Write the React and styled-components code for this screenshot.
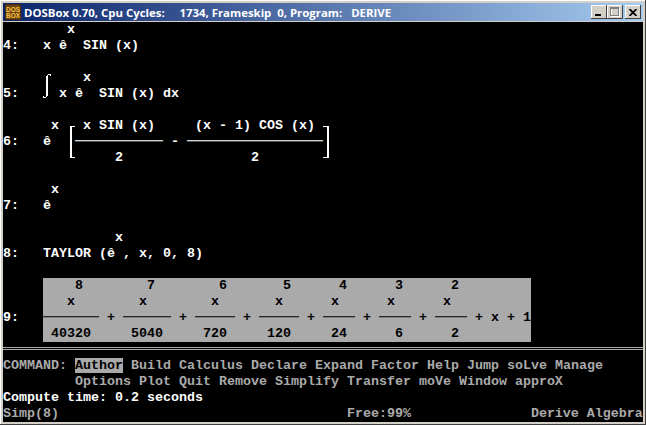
import React from "react";
import styled, { createGlobalStyle } from "styled-components";

const CELL_W = 8;

const Global = createGlobalStyle`
  html, body { margin: 0; padding: 0; background: #d4d0c8; }
`;

const Window = styled.div`
  box-sizing: border-box;
  width: 646px;
  height: 425px;
  padding: 3px;
  background: #d4d0c8;
  box-shadow: inset -1px -1px 0 #404040, inset 1px 1px 0 #fff;
  display: flex;
  flex-direction: column;
`;

const TitleBar = styled.div`
  height: 18px;
  flex: none;
  display: flex;
  align-items: center;
  gap: 3px;
  padding: 0 2px;
  background: linear-gradient(90deg, #0a246a, #a6caf0);
`;

const TitleText = styled.span`
  flex: 1;
  color: #fff;
  font: bold 11.4px "Open Sans", sans-serif;
  white-space: pre;
`;

const Controls = styled.div`
  display: flex;
  align-items: center;
`;

const CtlButton = styled.div`
  width: 16px;
  height: 14px;
  margin-left: ${(p) => (p.$gap ? "2px" : "0")};
  background: #d4d0c8;
  box-shadow: inset -1px -1px 0 #404040, inset 1px 1px 0 #fff;
  display: flex;
  align-items: center;
  justify-content: center;
`;

const Screen = styled.div`
  width: 640px;
  height: 400px;
  margin-top: 1px;
  background: #000;
  font: bold 13.333px/16px "Liberation Mono", monospace;
  color: #fff;
  overflow: hidden;
`;

const Row = styled.div`
  position: relative;
  height: 16px;
  white-space: pre;
  color: ${(p) => (p.$dim ? "#aaa" : "#fff")};
`;

const Plate = styled.span`
  display: inline-block;
  width: 488px;
  height: 16px;
  vertical-align: top;
  background: #aaa;
  color: #000;
`;

const Selected = styled.span`
  background: #aaa;
  color: #000;
`;

const Rule = styled.div`
  box-sizing: border-box;
  height: 16px;
  padding-top: 5px;
  display: flex;
  flex-direction: column;
  gap: 1px;
  &::before, &::after {
    content: "";
    height: 1px;
    background: #aaa;
  }
`;

const Stroke = styled.svg`
  position: absolute;
  top: 0;
  left: ${(p) => p.$col * CELL_W}px;
  fill: #fff;
  shape-rendering: crispEdges;
`;

const Integral = () => (
  <Stroke $col={5} width="8" height="32" viewBox="0 0 8 32">
    <path d="M3 6h1V5h1V4h3v2H7V5H5v21H4v1H3v1H0v-2h1v1h2z" />
  </Stroke>
);

const LeftBracket = () => (
  <Stroke $col={8} width="8" height="48" viewBox="0 0 8 48">
    <path d="M3 8h5v1H5v30h3v1H3z" />
  </Stroke>
);

const RightBracket = () => (
  <Stroke $col={40} width="8" height="48" viewBox="0 0 8 48">
    <path d="M0 8h6v32H0v-1h4V9H0z" />
  </Stroke>
);

const IconBadge = () => (
  <svg width="16" height="16" viewBox="0 0 16 16">
    <rect width="16" height="16" fill="#4a2a08" />
    <rect x="1" y="1" width="14" height="14" fill="#6e4210" />
    <text x="8" y="7.5" textAnchor="middle" fontSize="6.5" fontFamily="Liberation Sans" fontWeight="700" fill="#f6c840">DOS</text>
    <text x="8" y="14" textAnchor="middle" fontSize="6.5" fontFamily="Liberation Sans" fontWeight="700" fill="#f6c840">BOX</text>
  </svg>
);

// Text-mode screen: each row is a list of [column, text] cells.
const place = (cells) =>
  cells.reduce((line, [col, text]) => line.padEnd(col, " ") + text, "");
const dash = (n) => "─".repeat(n);

const expressions = [
  { cells: [[8, "x"]] },
  { cells: [[0, "4:"], [5, "x"], [7, "ê"], [10, "SIN (x)"]] },
  { cells: [] },
  { cells: [[10, "x"]], art: <Integral /> },
  { cells: [[0, "5:"], [7, "x"], [9, "ê"], [12, "SIN (x) dx"]] },
  { cells: [] },
  {
    cells: [[6, "x"], [10, "x"], [12, "SIN (x)"], [24, "(x - 1) COS (x)"]],
    art: (
      <>
        <LeftBracket />
        <RightBracket />
      </>
    ),
  },
  { cells: [[0, "6:"], [5, "ê"], [9, dash(11)], [21, "-"], [23, dash(17)]] },
  { cells: [[14, "2"], [31, "2"]] },
  { cells: [] },
  { cells: [[6, "x"]] },
  { cells: [[0, "7:"], [5, "ê"]] },
  { cells: [] },
  { cells: [[14, "x"]] },
  { cells: [[0, "8:"], [5, "TAYLOR (ê , x, 0, 8)"]] },
  { cells: [] },
];

const plate = [
  ["", [[4, "8"], [13, "7"], [22, "6"], [30, "5"], [37, "4"], [44, "3"], [51, "2"]]],
  ["", [[3, "x"], [12, "x"], [21, "x"], [29, "x"], [36, "x"], [43, "x"], [50, "x"]]],
  ["9:", [[0, dash(7)], [8, "+"], [10, dash(6)], [17, "+"], [19, dash(5)], [25, "+"], [27, dash(5)], [33, "+"], [35, dash(4)], [40, "+"], [42, dash(4)], [47, "+"], [49, dash(4)], [54, "+"], [56, "x"], [58, "+"], [60, "1"]]],
  ["", [[1, "40320"], [11, "5040"], [20, "720"], [28, "120"], [36, "24"], [44, "6"], [51, "2"]]],
];

export default function App() {
  return (
    <Window>
      <Global />
      <TitleBar>
        <IconBadge />
        <TitleText>DOSBox 0.70, Cpu Cycles:     1734, Frameskip  0, Program:   DERIVE</TitleText>
        <Controls>
          <CtlButton>
            <svg width="8" height="7" viewBox="0 0 8 7"><rect x="0" y="5" width="6" height="2" fill="#000" /></svg>
          </CtlButton>
          <CtlButton>
            <svg width="10" height="10" viewBox="0 0 10 10"><rect x="1.5" y="1.5" width="8" height="8" fill="none" stroke="#fff" /><rect x="0.5" y="0.5" width="8" height="8" fill="none" stroke="#808080" /><rect x="0" y="0" width="9" height="2" fill="#808080" /></svg>
          </CtlButton>
          <CtlButton $gap>
            <svg width="8" height="7" viewBox="0 0 8 7"><path d="M0.5 0 L7.5 7 M7.5 0 L0.5 7" stroke="#000" strokeWidth="1.8" /></svg>
          </CtlButton>
        </Controls>
      </TitleBar>
      <Screen>
        {expressions.map(({ cells, art }, i) => (
          <Row key={i}>
            {place(cells)}
            {art}
          </Row>
        ))}
        {plate.map(([label, cells], i) => (
          <Row key={i}>
            {label.padEnd(5, " ")}
            <Plate>{place(cells)}</Plate>
          </Row>
        ))}
        <Rule />
        <Row $dim>
          {"COMMAND: "}
          <Selected>Author</Selected>
          {" Build Calculus Declare Expand Factor Help Jump soLve Manage"}
        </Row>
        <Row $dim>{place([[9, "Options Plot Quit Remove Simplify Transfer moVe Window approX"]])}</Row>
        <Row>Compute time: 0.2 seconds</Row>
        <Row $dim>{place([[0, "Simp(8)"], [43, "Free:99%"], [66, "Derive Algebra"]])}</Row>
      </Screen>
    </Window>
  );
}
